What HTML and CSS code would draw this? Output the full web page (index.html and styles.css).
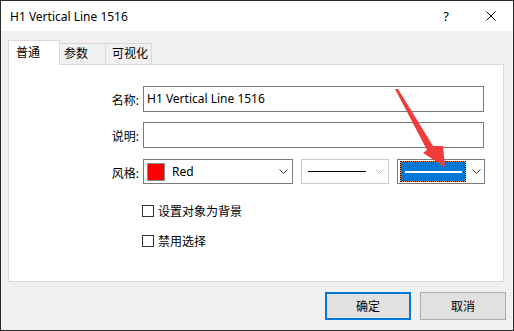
FILE: index.html
```html
<!DOCTYPE html>
<html lang="zh-CN">
<head>
    <meta charset="UTF-8">
    <title>H1 Vertical Line 1516</title>
    <link rel="stylesheet" href="styles.css">
</head>
<body>
    <div class="window">
        <div class="titlebar">
            <span class="title">H1 Vertical Line 1516</span>
            <span class="help">?</span>
            <svg class="close" width="10" height="10" viewBox="0 0 10 10">
                <path d="M0.5 0.5 L9.5 9.5 M9.5 0.5 L0.5 9.5" stroke="#000" stroke-width="1" fill="none"/>
            </svg>
        </div>

        <div class="client">
            <div class="tabs">
                <div class="tab tab-active">普通</div>
                <div class="tab tab-second">参数</div>
                <div class="tab tab-third">可视化</div>
            </div>

            <div class="panel">
                <div class="form-row row-name">
                    <label class="field-label">名称:</label>
                    <div class="text-input">H1 Vertical Line 1516</div>
                </div>
                <div class="form-row row-desc">
                    <label class="field-label">说明:</label>
                    <div class="text-input"></div>
                </div>
                <div class="form-row row-style">
                    <label class="field-label">风格:</label>
                    <div class="combo combo-color">
                        <span class="swatch"></span>
                        <span class="combo-text">Red</span>
                        <svg class="chevron" width="9" height="5" viewBox="0 0 9 5"><path d="M0.5 0.5 L4.5 4.5 L8.5 0.5" stroke="#333" fill="none"/></svg>
                    </div>
                    <div class="combo combo-line combo-disabled">
                        <span class="line-sample"></span>
                        <svg class="chevron" width="9" height="5" viewBox="0 0 9 5"><path d="M0.5 0.5 L4.5 4.5 L8.5 0.5" stroke="#c4c4c4" fill="none"/></svg>
                    </div>
                    <div class="combo combo-width">
                        <div class="focus-box">
                            <div class="selected"><span class="line-white"></span></div>
                        </div>
                        <svg class="chevron" width="9" height="5" viewBox="0 0 9 5"><path d="M0.5 0.5 L4.5 4.5 L8.5 0.5" stroke="#333" fill="none"/></svg>
                    </div>
                </div>
                <div class="check-row check-first">
                    <span class="checkbox"></span>
                    <span>设置对象为背景</span>
                </div>
                <div class="check-row check-second">
                    <span class="checkbox"></span>
                    <span>禁用选择</span>
                </div>
            </div>

            <div class="buttons">
                <button class="btn btn-default">确定</button>
                <button class="btn">取消</button>
            </div>
        </div>

        <!-- annotation arrow drawn over the dialog -->
        <svg class="arrow" width="514" height="331" viewBox="0 0 514 331">
            <polygon points="395,89 398,89 433,146 443,146 445,167 423,153 427,150" fill="#f23c3c"/>
        </svg>
    </div>
</body>
</html>
```

FILE: styles.css
```css
* {
    margin: 0;
    padding: 0;
    box-sizing: border-box;
}

body {
    font-family: 'Noto Sans', 'Noto Sans CJK SC', sans-serif;
    font-size: 12px;
    color: #000;
    background: #fff;
}

.window {
    position: relative;
    width: 514px;
    height: 331px;
    border: 1px solid #2b2b2b;
    background: #f0f0f0;
    display: flex;
    flex-direction: column;
}

/* Title bar */
.titlebar {
    height: 30px;
    background: #fff;
    display: flex;
    align-items: center;
    padding-left: 9px;
    padding-right: 17px;
}

.title {
    flex: 1;
    font-size: 12px;
}

.help {
    width: 20px;
    text-align: center;
    font-size: 13px;
    margin-right: 30px;
}

/* Client area */
.client {
    flex: 1;
    display: flex;
    flex-direction: column;
    padding: 9px 0 0 7px;
}

.tabs {
    display: flex;
    align-items: flex-end;
    height: 24px;
    position: relative;
    z-index: 1;
}

.tab {
    height: 21px;
    border: 1px solid #d9d9d9;
    border-bottom: none;
    background: #f0f0f0;
    line-height: 16px;
    padding-top: 2px;
}

.tab-active {
    width: 52px;
    height: 25px;
    margin-bottom: -1px;
    background: #fff;
    padding-left: 7px;
    padding-top: 4px;
}

.tab-second {
    width: 46px;
    border-left: none;
    padding-left: 4px;
}

.tab-third {
    width: 46px;
    border-left: none;
    padding-left: 6px;
}

.panel {
    height: 218px;
    margin-right: 9px;
    background: #fff;
    border: 1px solid #d9d9d9;
    display: flex;
    flex-direction: column;
}

.form-row {
    display: flex;
    align-items: center;
}

.row-name { margin-top: 21px; }
.row-desc { margin-top: 10px; }
.row-style { margin-top: 11px; }

.field-label {
    width: 130px;
    margin-right: 4px;
    text-align: right;
    padding-top: 2px;
}

.text-input {
    width: 341px;
    height: 26px;
    border: 1px solid #7a7a7a;
    padding-left: 3px;
    line-height: 24px;
    white-space: nowrap;
}

/* Combo boxes */
.combo {
    height: 25px;
    border: 1px solid #7a7a7a;
    display: flex;
    align-items: center;
    margin-right: 8px;
}

.combo-disabled {
    border-color: #cccccc;
}

.combo-color {
    width: 150px;
    padding-left: 3px;
    padding-right: 4px;
}

.swatch {
    width: 18px;
    height: 18px;
    background: #ff0000;
    border: 1px solid #8c8c8c;
    margin-right: 7px;
}

.combo-text {
    flex: 1;
}

.combo-line {
    width: 88px;
    padding-left: 6px;
    padding-right: 4px;
}

.line-sample {
    width: 58px;
    height: 1px;
    background: #000;
    margin-right: auto;
}

.combo-width {
    width: 88px;
    padding-left: 2px;
    padding-right: 3px;
}

.focus-box {
    width: 66px;
    height: 21px;
    border: 1px dotted #000;
    background: #ff8728;
    margin-right: auto;
}

.selected {
    height: 100%;
    background: #0078d7;
    display: flex;
    align-items: center;
    padding: 0 3px 0 4px;
}

.line-white {
    flex: 1;
    height: 2px;
    background: #fff;
}

/* Checkboxes */
.check-row {
    display: flex;
    align-items: center;
    margin-left: 133px;
    height: 12px;
}

.check-first { margin-top: 21px; }
.check-second { margin-top: 18px; }

.checkbox {
    width: 12px;
    height: 12px;
    border: 1px solid #333;
    background: #fff;
    margin-right: 4px;
}

/* Dialog buttons */
.buttons {
    display: flex;
    justify-content: flex-end;
    gap: 9px;
    margin-top: 10px;
    padding-right: 7px;
}

.btn {
    width: 86px;
    height: 28px;
    font-family: 'Noto Sans', 'Noto Sans CJK SC', sans-serif;
    font-size: 12px;
    background: #e1e1e1;
    border: 1px solid #adadad;
    color: #000;
}

.btn-default {
    border: 2px solid #0078d7;
}

.arrow {
    position: absolute;
    left: -1px;
    top: -1px;
    pointer-events: none;
}
```
